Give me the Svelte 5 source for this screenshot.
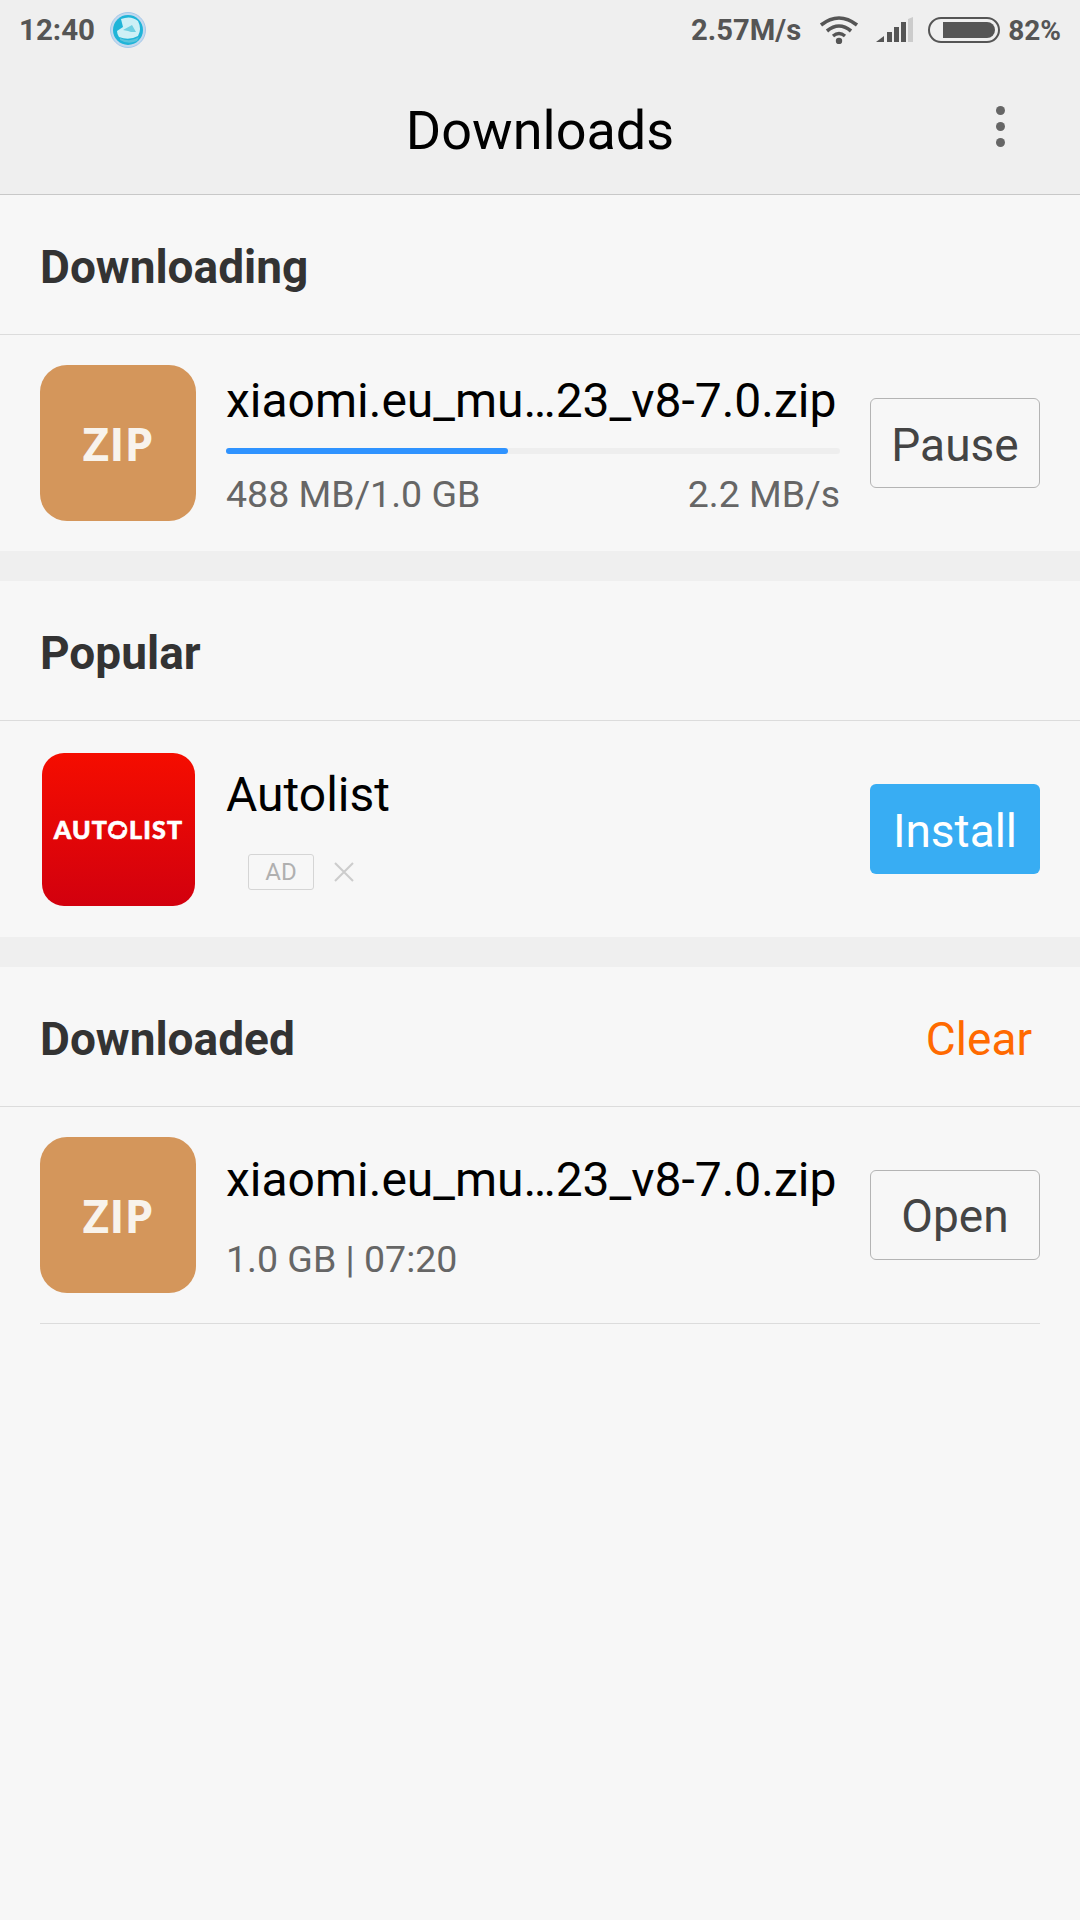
<script>
    const zipName = 'xiaomi.eu_mu…23_v8-7.0.zip'
</script>

<div class="page">
    <header class="header">
        <div class="status">
            <div class="status__left">
                <span>12:40</span>
                <svg class="globe" viewBox="0 0 36 36">
                    <circle cx="18" cy="18" r="17.5" fill="#c3d9ee" stroke="#a5c8ea" stroke-width="1"/>
                    <circle cx="18" cy="18" r="15" fill="#1fb4d8"/>
                    <path d="M11 7 Q21 3 28 9 Q32 17 28 24 Q19 29 9 25 Q7 22 7 19 L13 15 Z" fill="#cdf0f6"/>
                    <path d="M13 18 L22 13 L26 20 L21 20 L18 19 Z" fill="#6fd0e2"/>
                    <path d="M10 26 Q20 31 29 25 L27 29 Q18 33 10 28 Z" fill="#58c4dc"/>
                </svg>
            </div>
            <div class="status__right">
                <span class="status__speed">2.57M/s</span>
                <svg class="wifi" viewBox="0 0 40 28">
                    <path d="M2 9 Q20 -5 38 9" fill="none" stroke="#555" stroke-width="3.6"/>
                    <path d="M8 15 Q20 5 32 15" fill="none" stroke="#555" stroke-width="3.6"/>
                    <path d="M14 20 Q20 15 26 20" fill="none" stroke="#555" stroke-width="3.4"/>
                    <circle cx="20" cy="25" r="3.2" fill="#555"/>
                </svg>
                <svg class="signal" viewBox="0 0 37 26">
                    <path d="M0 25 L8 19 V25 Z" fill="#555"/>
                    <rect x="11" y="15" width="5" height="10" fill="#555"/>
                    <rect x="18" y="10" width="5" height="15" fill="#555"/>
                    <rect x="25" y="5" width="5" height="20" fill="#555"/>
                    <path d="M32 2 L37 0 V25 H32 Z" fill="#ccc"/>
                </svg>
                <div class="battery"><div class="battery__fill"></div></div>
                <span class="status__pct">82%</span>
            </div>
        </div>
        <div class="toolbar">
            <h1 class="toolbar__title">Downloads</h1>
            <div class="more"><i></i><i></i><i></i></div>
        </div>
    </header>

    <section class="section">
        <div class="section__head"><h2>Downloading</h2></div>
        <div class="row">
            <div class="zip">ZIP</div>
            <div class="row__info">
                <div class="row__name">{zipName}</div>
                <div class="progress"><div class="progress__bar" style="width: 46%"></div></div>
                <div class="row__meta"><span>488 MB/1.0 GB</span><span>2.2 MB/s</span></div>
            </div>
            <button class="btn">Pause</button>
        </div>
    </section>

    <section class="section">
        <div class="section__head"><h2>Popular</h2></div>
        <div class="row">
            <div class="autolist"><span>AUT<span class="autolist__o">O</span>LIST</span></div>
            <div class="row__info row__info--ad">
                <div class="row__name">Autolist</div>
                <div class="ad">
                    <span class="ad__tag">AD</span>
                    <svg class="ad__close" viewBox="0 0 20 20"><path d="M1 1 L19 19 M19 1 L1 19" stroke="#ccc" stroke-width="2"/></svg>
                </div>
            </div>
            <button class="btn btn--blue">Install</button>
        </div>
    </section>

    <section class="section section--last">
        <div class="section__head"><h2>Downloaded</h2><span class="clear">Clear</span></div>
        <div class="row row--line">
            <div class="zip">ZIP</div>
            <div class="row__info">
                <div class="row__name">{zipName}</div>
                <div class="row__meta row__meta--done"><span>1.0 GB | 07:20</span></div>
            </div>
            <button class="btn">Open</button>
        </div>
    </section>
</div>

<style>
    :global(body) {
        margin: 0;
        background: #f7f7f7;
    }
    .page {
        width: 1080px;
        height: 1920px;
        overflow: hidden;
        background: #efefef;
        font-family: Roboto, sans-serif;
    }
    .header {
        height: 194px;
        background: #efefef;
        border-bottom: 1px solid #c8c8c8;
    }
    .status {
        display: flex;
        justify-content: space-between;
        align-items: center;
        height: 60px;
        padding: 0 19px;
        font-size: 29.5px;
        font-weight: 700;
        color: #555;
    }
    .status__speed {
        font-size: 29.2px;
    }
    .status__pct {
        font-size: 28px;
    }
    .status__left, .status__right {
        display: flex;
        align-items: center;
    }
    .globe {
        width: 36px;
        height: 36px;
        margin-left: 15px;
    }
    .wifi {
        width: 40px;
        height: 28px;
        margin-left: 18px;
    }
    .signal {
        width: 37px;
        height: 26px;
        margin-left: 17px;
    }
    .battery {
        box-sizing: border-box;
        width: 72px;
        height: 26px;
        margin: 0 8px 0 15px;
        padding: 3px 3px 3px 13px;
        border: 2px solid #555;
        border-radius: 13px;
    }
    .battery__fill {
        height: 100%;
        background: #555;
        border-radius: 0 8px 8px 0;
    }
    .toolbar {
        position: relative;
        display: flex;
        align-items: center;
        justify-content: center;
        height: 134px;
    }
    .toolbar__title {
        margin: 0;
        padding-top: 7px;
        font-size: 54px;
        font-weight: 400;
        color: #000;
    }
    .more {
        position: absolute;
        right: 75px;
        top: 46px;
        display: flex;
        flex-direction: column;
        gap: 7px;
    }
    .more i {
        display: block;
        width: 9px;
        height: 9px;
        border-radius: 50%;
        background: #666;
    }
    .section {
        margin-bottom: 30px;
        background: #f7f7f7;
    }
    .section--last {
        margin-bottom: 0;
        height: 953px;
    }
    .section__head {
        display: flex;
        justify-content: space-between;
        align-items: center;
        box-sizing: border-box;
        height: 140px;
        padding: 0 48px 0 40px;
        border-bottom: 1px solid #dcdcdc;
    }
    .section__head h2 {
        margin: 0;
        padding-top: 4px;
        font-size: 46px;
        font-weight: 700;
        color: #333;
    }
    .clear {
        padding-top: 4px;
        font-size: 46px;
        color: #ff6a00;
    }
    .row {
        display: flex;
        align-items: center;
        box-sizing: border-box;
        height: 216px;
        padding: 0 40px;
    }
    .row--line {
        height: 217px;
        margin: 0 40px;
        padding: 0 0 1px;
        border-bottom: 1px solid #dcdcdc;
    }
    .zip {
        flex: none;
        display: flex;
        align-items: center;
        justify-content: center;
        width: 156px;
        height: 156px;
        border-radius: 27px;
        background: #d4965b;
        color: #f8f3ec;
        font-family: "Open Sans", sans-serif;
        font-size: 46px;
        font-weight: 700;
    }
    .autolist {
        flex: none;
        display: flex;
        align-items: center;
        justify-content: center;
        width: 153px;
        height: 153px;
        margin: 0 1px 0 2px;
        border-radius: 22px;
        background: linear-gradient(#f50d00, #d2000e);
        color: #fff;
        font-family: Lato, sans-serif;
        font-size: 25px;
        font-weight: 900;
        letter-spacing: 1.2px;
        -webkit-text-stroke: 0.6px #fff;
    }
    .autolist__o {
        position: relative;
    }
    .autolist__o::after {
        content: "";
        position: absolute;
        left: 3px;
        top: 15px;
        width: 14px;
        height: 3px;
        background: #e60308;
        transform: rotate(-20deg);
    }
    .row__info {
        flex: none;
        box-sizing: border-box;
        width: 614px;
        margin-left: 30px;
        margin-right: 30px;
        padding-top: 3px;
    }
    .row__info--ad {
        padding-top: 0;
        padding-bottom: 2px;
    }
    .row__name {
        font-size: 48px;
        line-height: 56px;
        color: #000;
        white-space: nowrap;
    }
    .progress {
        height: 6px;
        margin-top: 19px;
        border-radius: 3px;
        background: #eeeeee;
    }
    .progress__bar {
        height: 100%;
        border-radius: 3px;
        background: #2f93ff;
    }
    .row__meta {
        display: flex;
        justify-content: space-between;
        margin-top: 18px;
        font-size: 37.5px;
        line-height: 44px;
        color: #666;
    }
    .row__meta--done {
        margin-top: 29px;
    }
    .ad {
        display: flex;
        align-items: center;
        margin: 31px 0 0 22px;
    }
    .ad__tag {
        box-sizing: border-box;
        width: 66px;
        height: 36px;
        border: 1px solid #d5d5d5;
        border-radius: 3px;
        font-size: 24px;
        line-height: 34px;
        text-align: center;
        color: #b0b0b0;
    }
    .ad__close {
        width: 20px;
        height: 20px;
        margin-left: 20px;
    }
    .btn {
        flex: none;
        box-sizing: border-box;
        width: 170px;
        height: 90px;
        padding: 3px 0 0;
        border: 1px solid #b4b4b4;
        border-radius: 6px;
        background: transparent;
        font-family: Roboto, sans-serif;
        font-size: 46px;
        color: #444;
    }
    .btn--blue {
        border: none;
        background: #38adf3;
        color: #fff;
    }
</style>
